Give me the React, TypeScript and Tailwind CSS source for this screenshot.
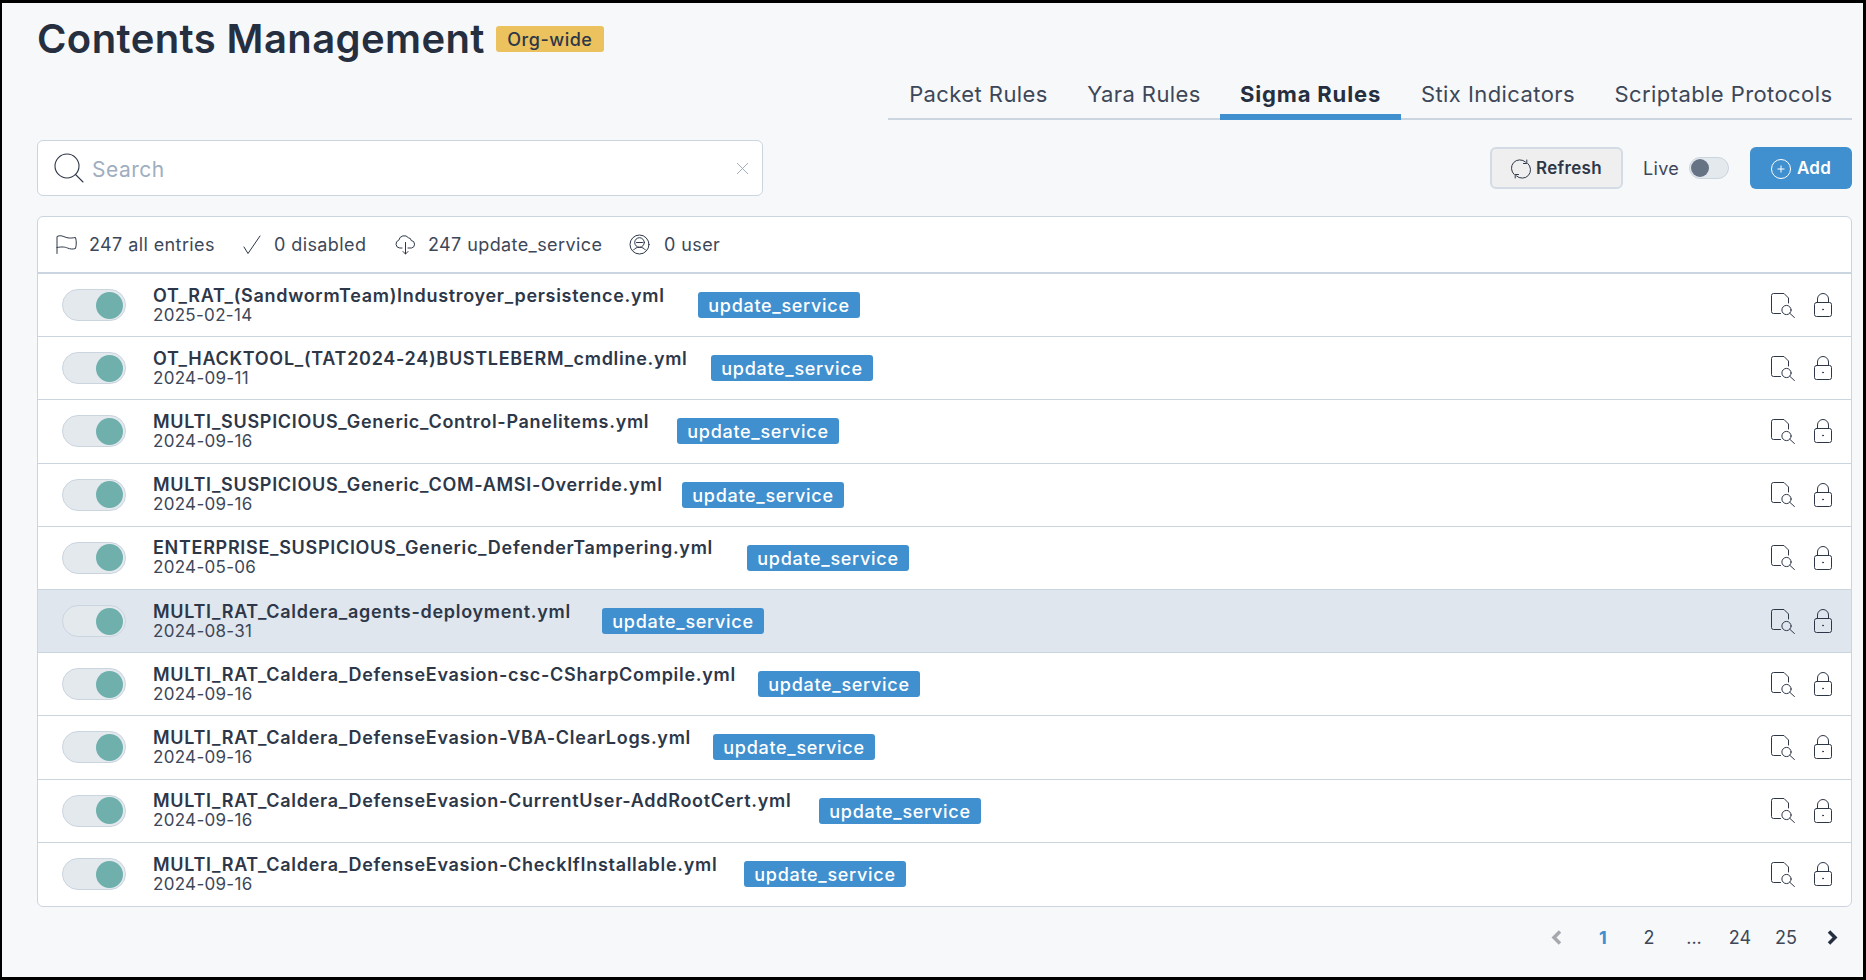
import { Fragment } from "react";

const rows = [
  { name: "OT_RAT_(SandwormTeam)Industroyer_persistence.yml", date: "2025-02-14", nameW: "w-[545px]" },
  { name: "OT_HACKTOOL_(TAT2024-24)BUSTLEBERM_cmdline.yml", date: "2024-09-11", nameW: "w-[558px]" },
  { name: "MULTI_SUSPICIOUS_Generic_Control-Panelitems.yml", date: "2024-09-16", nameW: "w-[524px]" },
  { name: "MULTI_SUSPICIOUS_Generic_COM-AMSI-Override.yml", date: "2024-09-16", nameW: "w-[529px]" },
  { name: "ENTERPRISE_SUSPICIOUS_Generic_DefenderTampering.yml", date: "2024-05-06", nameW: "w-[594px]" },
  { name: "MULTI_RAT_Caldera_agents-deployment.yml", date: "2024-08-31", nameW: "w-[449px]", active: true },
  { name: "MULTI_RAT_Caldera_DefenseEvasion-csc-CSharpCompile.yml", date: "2024-09-16", nameW: "w-[605px]" },
  { name: "MULTI_RAT_Caldera_DefenseEvasion-VBA-ClearLogs.yml", date: "2024-09-16", nameW: "w-[560px]" },
  { name: "MULTI_RAT_Caldera_DefenseEvasion-CurrentUser-AddRootCert.yml", date: "2024-09-16", nameW: "w-[666px]" },
  { name: "MULTI_RAT_Caldera_DefenseEvasion-CheckIfInstallable.yml", date: "2024-09-16", nameW: "w-[591px]" },
];

const tabs = [
  { label: "Packet Rules", w: "w-[179px]" },
  { label: "Yara Rules", w: "w-[152px]" },
  { label: "Sigma Rules", w: "w-[181px]", active: true },
  { label: "Stix Indicators", w: "w-[194px]" },
  { label: "Scriptable Protocols", w: "w-[257px]" },
];

const stroke = { fill: "none", stroke: "#2d3748", strokeLinecap: "round", strokeLinejoin: "round" } as const;

const DocSearch = () => (
  <svg width="25" height="25" viewBox="0 0 25 25" {...stroke} strokeWidth="1">
    <path d="M9.5 20.5H2.5a2 2 0 0 1-2-2V2.5a2 2 0 0 1 2-2h10.5l4.5 4.5v5" />
    <circle cx="15.5" cy="17" r="4.6" />
    <path d="M18.9 20.4l4.6 4.2" />
  </svg>
);

const Lock = () => (
  <svg width="18" height="24" viewBox="0 0 18 24" {...stroke} strokeWidth="1">
    <rect x="0.5" y="9.5" width="17" height="14" rx="2" />
    <path d="M3.5 9.5V6a5.500 5.500 0 0 1 11 0v3.5" />
    <circle cx="9" cy="16.5" r="0.5" />
  </svg>
);

const Toggle = () => (
  <div className="flex h-8 w-16 items-center justify-end rounded-full border border-[#cbd5e0] bg-[#e4e9ee] pr-[2px]">
    <div className="h-[27px] w-[27px] rounded-full bg-[#6fafac]" />
  </div>
);

function StatsBar() {
  return (
    <div className="flex h-[57px] items-center border-b-2 border-[#cbd5e0] pl-[18px] text-[18px] tracking-[0.4px] text-[#3d4758]">
      <svg width="21" height="19" viewBox="0 0 21 19" {...stroke} strokeWidth="1">
        <path d="M1 18.5V1.5c3-1.500 5.500-.5 8 .5s5 1.500 10.500.5c1 3.500 1 7.500 0 11-3 1-5.500.5-8-.5s-5-1.500-10.500-.5" />
      </svg>
      <span className="ml-[12px] w-[124px] whitespace-nowrap">247 all entries</span>
      <span className="ml-[30px] flex">
        <svg width="18" height="19" viewBox="0 0 18 19" {...stroke} strokeWidth="1">
          <path d="M1 12l4 6.500L17 1" />
        </svg>
      </span>
      <span className="ml-[13px] w-[94px] whitespace-nowrap">0 disabled</span>
      <span className="ml-[27px] flex">
        <svg width="21" height="21" viewBox="0 0 21 21" {...stroke} strokeWidth="1">
          <path d="M7 14H4.800A4 4 0 0 1 3.800 6.200 5.500 5.500 0 0 1 13.500 3.800 3 3 0 0 1 16.200 6.500 3.800 3.800 0 0 1 16.500 14H13" />
          <path d="M10.500 8.500v11.500M8 17.500l2.500 2.500 2.500-2.500" />
        </svg>
      </span>
      <span className="ml-[12px] w-[175px] whitespace-nowrap">247 update_service</span>
      <span className="ml-[26px] flex">
        <svg width="21" height="21" viewBox="0 0 21 21" {...stroke} strokeWidth="1">
          <circle cx="10.500" cy="10.500" r="9.500" />
          <circle cx="10.500" cy="8.500" r="4.800" />
          <path d="M7.500 8.500h6" />
          <path d="M4.500 16c1.500-2 3.500-2.700 6-2.700s4.500.7 6 2.700" />
        </svg>
      </span>
      <span className="ml-[14px] whitespace-nowrap">0 user</span>
    </div>
  );
}

function RuleRow({ row, last }: { row: (typeof rows)[number]; last: boolean }) {
  return (
    <div
      className={`flex h-[63.2px] items-center pl-6 pr-[19px] ${last ? "" : "border-b border-[#cbd5e0]"} ${
        row.active ? "bg-[#dfe6ee]" : ""
      }`}
    >
      <Toggle />
      <div className={`ml-[27px] shrink-0 ${row.nameW}`}>
        <div className="whitespace-nowrap text-[18px] leading-[20px] font-semibold tracking-[0.7px] text-[#2d3748]">
          {row.name}
        </div>
        <div className="text-[17px] leading-[19px] tracking-[0.3px] text-[#3d4758]">{row.date}</div>
      </div>
      <span className="flex h-[26px] w-[162px] items-center justify-center rounded-[3px] bg-[#4090cf] pt-px text-[18px] font-medium tracking-[0.7px] text-white">
        update_service
      </span>
      <div className="ml-auto flex items-center gap-[18px]">
        <DocSearch />
        <Lock />
      </div>
    </div>
  );
}

export default function App() {
  return (
    <div className="h-[980px] w-[1866px] overflow-hidden border-t-[3px] border-r-[3px] border-b-[3px] border-l-2 border-black bg-[#f7f8fa] pt-[14px] pr-[11px] pl-[35px] font-['Inter',sans-serif] text-[#2d3748]">
      {/* Title */}
      <div className="flex h-11 items-center">
        <h1 className="text-[40px] font-semibold tracking-[0.4px] whitespace-nowrap text-[#252f3f]">Contents Management</h1>
        <span className="ml-[11px] flex h-[26px] w-[108px] items-center justify-center rounded-[3px] bg-[#ebc25e] pt-px text-[18px] font-medium tracking-[0.5px] text-[#2d3748]">
          Org-wide
        </span>
      </div>

      {/* Tabs */}
      <div className="mt-[9px] flex justify-end">
        <div className="flex h-[50px] border-b-2 border-[#cbd5e0] pl-px">
          {tabs.map((t) => (
            <div
              key={t.label}
              className={`${t.w} -mb-[2px] flex items-center justify-center pt-[4px] text-[22px] whitespace-nowrap ${
                t.active
                  ? "border-b-[6px] border-[#4090cf] font-bold tracking-[0.85px] text-[#252f3f]"
                  : "pb-[6px] tracking-[0.42px] text-[#3d4758]"
              }`}
            >
              {t.label}
            </div>
          ))}
        </div>
      </div>

      {/* Search + actions */}
      <div className="mt-5 flex items-center">
        <div className="flex h-[56px] w-[726px] items-center rounded-md border border-[#cbd5e0] bg-white pr-[13px] pl-4">
          <svg width="30" height="30" viewBox="0 0 30 30" {...stroke} strokeWidth="1.100">
            <circle cx="13" cy="13" r="12" />
            <path d="M21.500 21.500l7.500 7.500" />
          </svg>
          <span className="ml-2 pt-[3px] text-[21px] tracking-[0.5px] text-[#a0aec0]">Search</span>
          <svg className="ml-auto" width="13" height="13" viewBox="0 0 13 13" fill="none" stroke="#a0aec0" strokeWidth="1">
            <path d="M1 1l11 11M12 1L1 12" />
          </svg>
        </div>
        <div className="ml-auto flex items-center">
          <button className="flex h-[42px] w-[133px] items-center justify-center gap-[5px] rounded-md border-2 border-[#d3dce6] bg-[#efefef] pt-px text-[17px] font-semibold tracking-[0.3px] text-[#2d3748]">
            <svg width="20" height="20" viewBox="0 0 20 20" {...stroke} strokeWidth="1">
              <path d="M3.200 15.500A8 8 0 0 1 14.500 3" />
              <path d="M16.800 4.500A8 8 0 0 1 5.500 17" />
              <path d="M15.800 1v3.500H12.500" />
              <path d="M4.200 19v-3.500H7.500" />
            </svg>
            Refresh
          </button>
          <span className="ml-5 text-[18px] tracking-[0.3px] text-[#3d4758]">Live</span>
          <div className="ml-[10px] flex h-[22px] w-10 items-center rounded-full border border-[#cbd5e0] bg-[#e4e9ee] pl-px">
            <div className="h-[18px] w-[18px] rounded-full bg-[#667385]" />
          </div>
          <button className="ml-[21px] flex h-[42px] w-[102px] items-center justify-center gap-[6px] rounded-md bg-[#4090cf] pt-px text-[17px] font-semibold tracking-[0.3px] text-white">
            <svg width="20" height="20" viewBox="0 0 20 20" fill="none" stroke="#fff" strokeWidth="1">
              <circle cx="10" cy="10" r="9.500" />
              <path d="M10 6.500v7M6.500 10h7" />
            </svg>
            Add
          </button>
        </div>
      </div>

      {/* List */}
      <div className="mt-5 overflow-hidden rounded-md border border-[#cbd5e0] bg-white">
        <StatsBar />
        {rows.map((row, i) => (
          <Fragment key={row.name}>
            <RuleRow row={row} last={i === rows.length - 1} />
          </Fragment>
        ))}
      </div>

      {/* Pagination */}
      <div className="mt-[13px] -mr-[3px] flex h-9 items-center justify-end text-[18px] text-[#3d4758]">
        <span className="flex w-[46px] justify-center text-[#a5a9ae]">
          <svg width="11" height="15" viewBox="0 0 11 15" fill="none" stroke="currentColor" strokeWidth="3.500">
            <path d="M9 1.500L3 7.500l6 6" />
          </svg>
        </span>
        <span className="w-[46px] pl-[2px] text-center font-bold text-[#4090cf]">1</span>
        <span className="w-[46px] pl-[2px] text-center">2</span>
        <span className="w-[46px] text-center">...</span>
        <span className="w-[46px] text-center">24</span>
        <span className="w-[46px] text-center">25</span>
        <span className="flex w-[46px] justify-center text-[#252f3f]">
          <svg width="11" height="15" viewBox="0 0 11 15" fill="none" stroke="currentColor" strokeWidth="3.500">
            <path d="M2 1.500l6 6-6 6" />
          </svg>
        </span>
      </div>
    </div>
  );
}
